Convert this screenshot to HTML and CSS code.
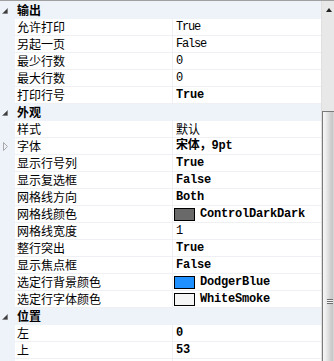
FILE: index.html
```html
<!DOCTYPE html>
<html lang="zh-CN">
<head>
    <meta charset="UTF-8">
    <title>属性</title>
    <link rel="stylesheet" href="styles.css">
</head>
<body>
<div class="grid-view">
    <div class="props">
        <div class="row cat">
            <span class="gutter"><svg viewBox="0 0 15 16"><polygon points="7.5,6.5 7.5,11.5 2.5,11.5"/></svg></span>
            <span class="name">输出</span>
        </div>
        <div class="row"><span class="gutter"></span><span class="name">允许打印</span><span class="value">True</span></div>
        <div class="row"><span class="gutter"></span><span class="name">另起一页</span><span class="value">False</span></div>
        <div class="row"><span class="gutter"></span><span class="name">最少行数</span><span class="value">0</span></div>
        <div class="row"><span class="gutter"></span><span class="name">最大行数</span><span class="value">0</span></div>
        <div class="row"><span class="gutter"></span><span class="name">打印行号</span><span class="value bold">True</span></div>

        <div class="row cat">
            <span class="gutter"><svg viewBox="0 0 15 16"><polygon points="7.5,6.5 7.5,11.5 2.5,11.5"/></svg></span>
            <span class="name">外观</span>
        </div>
        <div class="row"><span class="gutter"></span><span class="name">样式</span><span class="value cjk">默认</span></div>
        <div class="row">
            <span class="gutter"><svg class="sub" viewBox="0 0 15 16"><polygon points="3.5,4.5 7.5,8.5 3.5,12.5"/></svg></span>
            <span class="name">字体</span><span class="value bold">宋体，9pt</span>
        </div>
        <div class="row"><span class="gutter"></span><span class="name">显示行号列</span><span class="value bold">True</span></div>
        <div class="row"><span class="gutter"></span><span class="name">显示复选框</span><span class="value bold">False</span></div>
        <div class="row"><span class="gutter"></span><span class="name">网格线方向</span><span class="value bold">Both</span></div>
        <div class="row"><span class="gutter"></span><span class="name">网格线颜色</span><span class="value bold"><i class="swatch dark"></i>ControlDarkDark</span></div>
        <div class="row"><span class="gutter"></span><span class="name">网格线宽度</span><span class="value">1</span></div>
        <div class="row"><span class="gutter"></span><span class="name">整行突出</span><span class="value bold">True</span></div>
        <div class="row"><span class="gutter"></span><span class="name">显示焦点框</span><span class="value bold">False</span></div>
        <div class="row"><span class="gutter"></span><span class="name">选定行背景颜色</span><span class="value bold"><i class="swatch blue"></i>DodgerBlue</span></div>
        <div class="row"><span class="gutter"></span><span class="name">选定行字体颜色</span><span class="value bold"><i class="swatch smoke"></i>WhiteSmoke</span></div>

        <div class="row cat">
            <span class="gutter"><svg viewBox="0 0 15 16"><polygon points="7.5,6.5 7.5,11.5 2.5,11.5"/></svg></span>
            <span class="name">位置</span>
        </div>
        <div class="row"><span class="gutter"></span><span class="name">左</span><span class="value bold">0</span></div>
        <div class="row"><span class="gutter"></span><span class="name">上</span><span class="value bold">53</span></div>
        <div class="row"><span class="gutter"></span><span class="name"></span><span class="value"></span></div>
    </div>
    <div class="scrollbar">
        <div class="arrow-up"></div>
        <div class="thumb"><span class="grip"></span></div>
    </div>
</div>
</body>
</html>
```

FILE: styles.css
```css
:root {
    --panel: #eef3fa;
    --line: #eef0f3;
    --track: #e8e8e8;
}
body {
    margin: 0;
    background: #fff;
    font-family: "Noto Sans CJK SC", sans-serif;
    font-size: 12px;
    color: #000;
}
.grid-view {
    display: flex;
    height: 360px;
    overflow: hidden;
    border-top: 1px solid #a0a0a0;
}
.props {
    width: 321px;
    padding-top: 1px;
    background: var(--panel);
}
.row {
    display: flex;
    height: 17px;
}
.gutter {
    width: 15px;
    flex: none;
    height: 17px;
}
.gutter svg {
    display: block;
    width: 15px;
    height: 16px;
}
.gutter polygon {
    fill: #3c3c3c;
    stroke: #6a6a6a;
    stroke-width: 0.5;
}
.gutter .sub polygon {
    fill: none;
    stroke: #a8a8a8;
    stroke-width: 1;
}
.name, .value {
    box-sizing: border-box;
    height: 17px;
    line-height: 16px;
    background: #fff;
    border-bottom: 1px solid var(--line);
    white-space: nowrap;
    overflow: hidden;
}
.name {
    width: 158px;
    padding-left: 2px;
    border-right: 1px solid var(--line);
}
.value {
    width: 148px;
    padding-left: 3px;
    display: flex;
    align-items: center;
    font-family: "Liberation Mono", "Noto Sans CJK SC", monospace;
    font-size: 12px;
    letter-spacing: -1.2px;
}
.value.cjk {
    font-family: "Noto Sans CJK SC", sans-serif;
    letter-spacing: 0;
}
.value.bold {
    font-weight: bold;
    letter-spacing: -0.2px;
}
.cat .name {
    background: var(--panel);
    border-bottom-color: var(--panel);
    border-right: none;
    font-weight: bold;
    width: 306px;
}
.swatch {
    display: inline-block;
    box-sizing: border-box;
    width: 21px;
    height: 13px;
    margin: 0 5px 0 -2px;
    border: 1px solid #000;
}
.swatch.dark { background: #696969; }
.swatch.blue { background: #1e90ff; }
.swatch.smoke { background: #f5f5f5; }
.scrollbar {
    width: 13px;
    background: var(--track);
    border-left: 1px solid #e0e0e0;
    box-sizing: border-box;
}
.arrow-up {
    width: 0;
    height: 0;
    margin: 7px 0 0 4px;
    border-left: 3px solid transparent;
    border-right: 3px solid transparent;
    border-bottom: 4px solid #222;
}
.thumb {
    margin-top: 99px;
    height: 400px;
    border-left: 1px solid #7a7a7a;
    border-top: 1px solid #7a7a7a;
    background: linear-gradient(to right, #f6f6f6 0, #f0f0f0 20%, #d6d6d6 60%, #c6c6c6 85%, #dcdcdc 100%);
    position: relative;
}
.grip {
    position: absolute;
    left: 4px;
    top: 187px;
    width: 6px;
    height: 5px;
    background: repeating-linear-gradient(to bottom, #6e6e6e 0, #6e6e6e 1px, #f4f4f4 1px, #f4f4f4 2px);
}
```
